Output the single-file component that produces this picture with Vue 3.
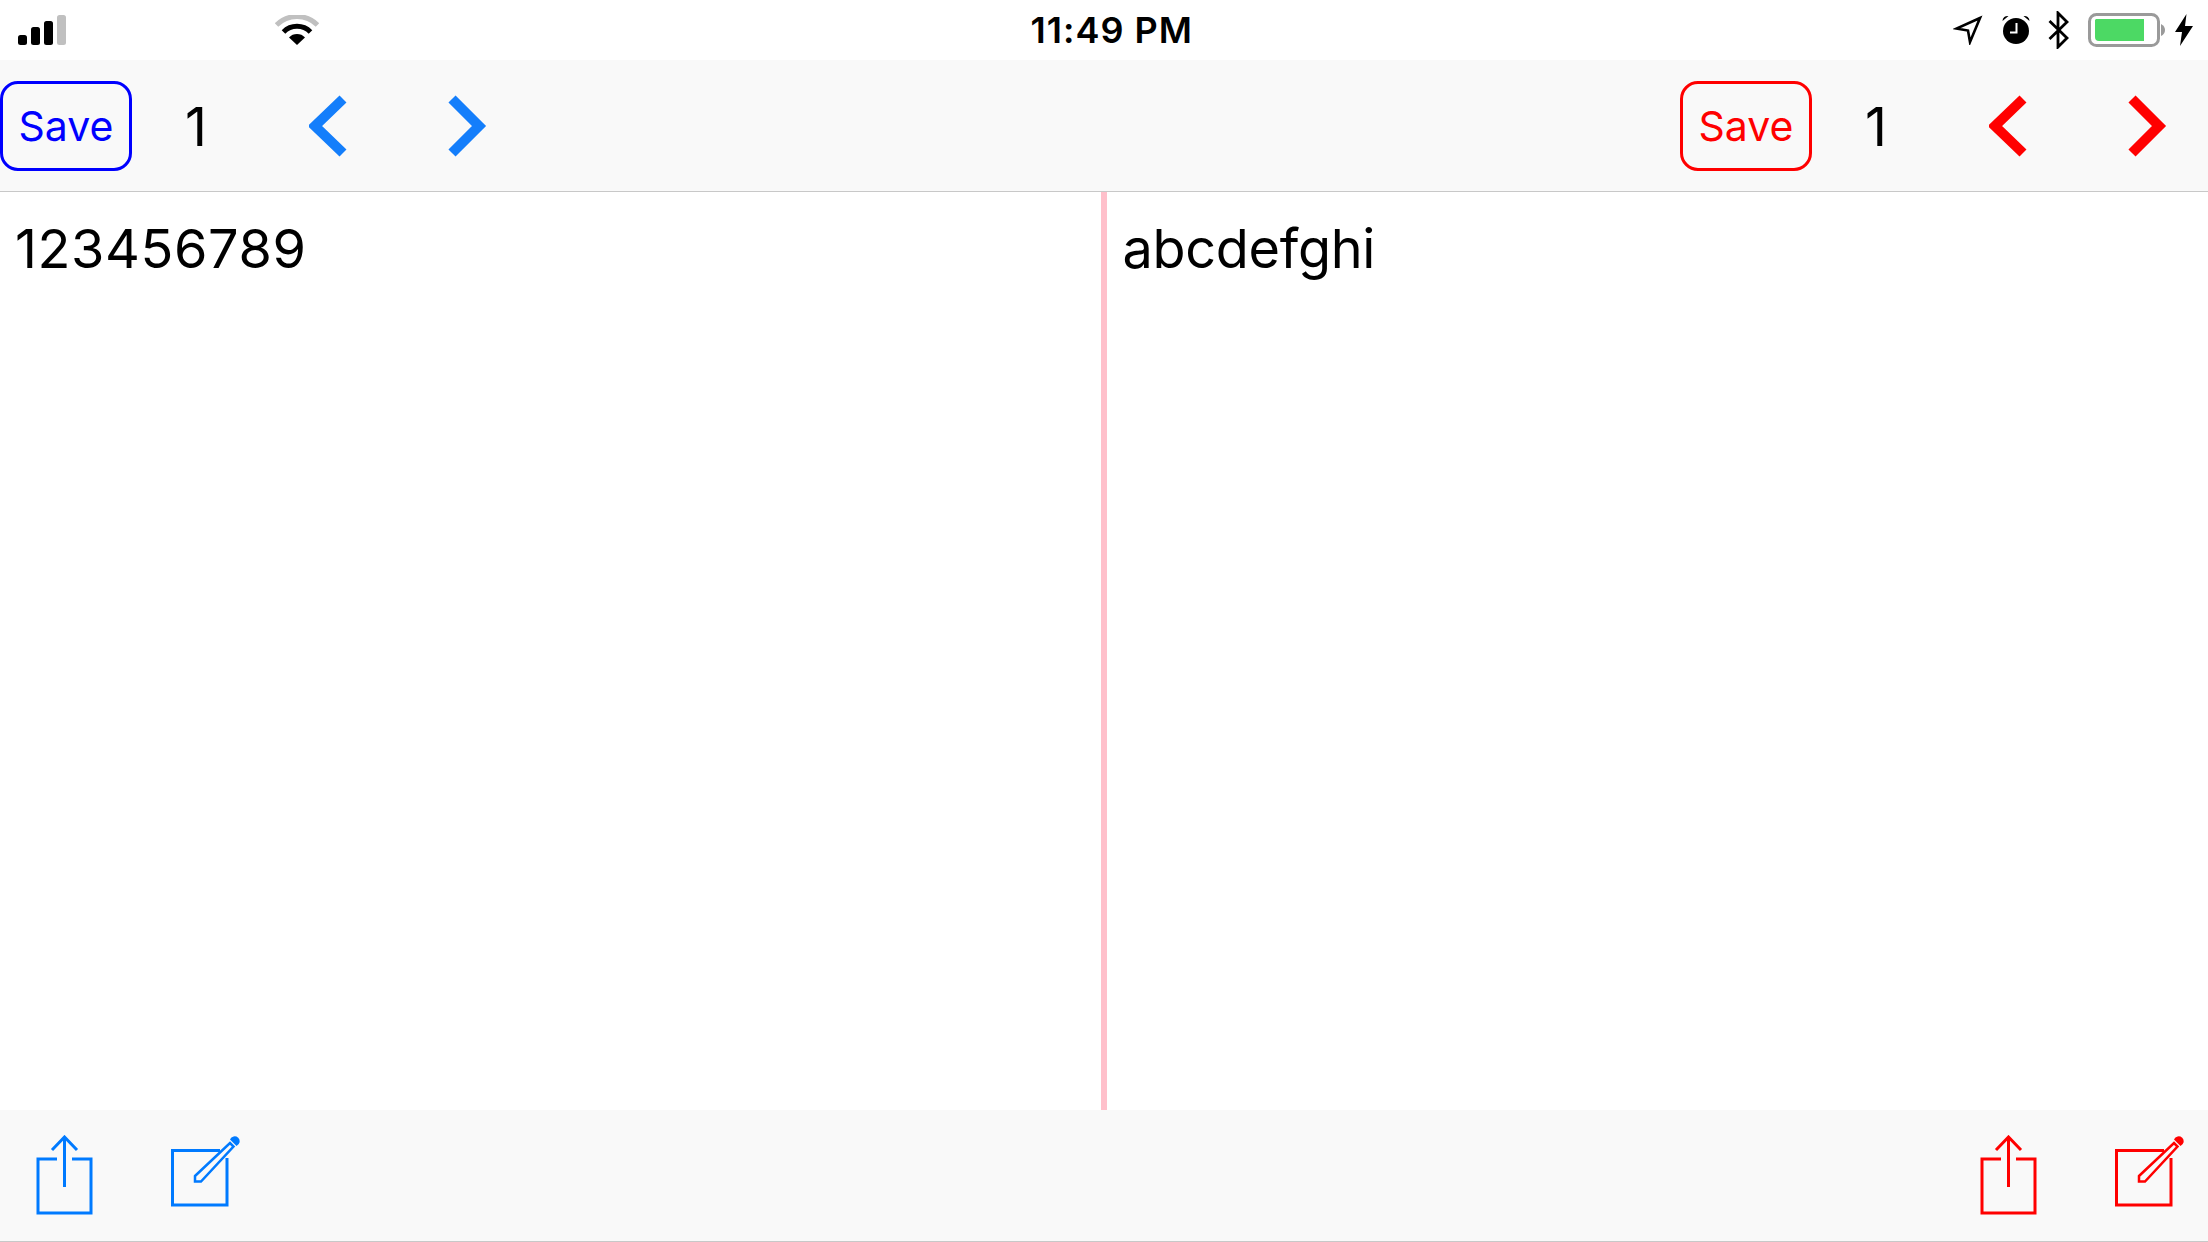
<template>
  <div class="screen">
    <div class="status-bar">
      <div class="status-left">
        <svg class="signal" width="48" height="30" viewBox="0 0 48 30">
          <rect x="0" y="20" width="9" height="10" rx="2.5" fill="#000" />
          <rect x="13" y="12" width="9" height="18" rx="2.5" fill="#000" />
          <rect x="26" y="6" width="9" height="24" rx="2.5" fill="#000" />
          <rect x="39" y="0" width="9" height="30" rx="2.5" fill="#c0c0c0" />
        </svg>
        <svg class="wifi" width="44" height="30" viewBox="0 0 44 30">
          <path d="M1.5 10 A29 29 0 0 1 42.5 10" fill="none" stroke="#c0c0c0" stroke-width="5" />
          <path d="M8.5 17 A19 19 0 0 1 35.5 17" fill="none" stroke="#000" stroke-width="5" />
          <path d="M14 22.5 A11 11 0 0 1 30 22.5 L22 30 Z" fill="#000" />
        </svg>
      </div>
      <div class="clock">11:49 PM</div>
      <div class="status-right">
        <svg width="30" height="30" viewBox="0 0 30 30">
          <path d="M27 3 L3.5 13.5 L15 15.5 L17 27 Z" fill="none" stroke="#000" stroke-width="2.6" stroke-linejoin="miter" />
        </svg>
        <svg class="alarm" width="28" height="30" viewBox="0 0 28 30">
          <circle cx="14" cy="16" r="13" fill="#000" />
          <path d="M0.5 6 A5 5 0 0 1 6.5 1 Z M27.5 6 A5 5 0 0 0 21.5 1 Z" fill="#000" />
          <path d="M14.5 8 V17.5 H8" fill="none" stroke="#fff" stroke-width="2" />
        </svg>
        <svg class="bluetooth" width="22" height="38" viewBox="0 0 22 38">
          <path d="M1.5 10 L19 27 L10 36 V2 L19 11 L1.5 28" fill="none" stroke="#000" stroke-width="2.8" />
        </svg>
        <svg class="battery" width="78" height="34" viewBox="0 0 78 34">
          <rect x="1.5" y="1.5" width="69" height="31" rx="7" fill="none" stroke="#9a9a9a" stroke-width="3" />
          <path d="M8 6 H56 V28 H11 A4 4 0 0 1 7 24 V7 Z" fill="#4cd964" />
          <path d="M73 11 Q77 13 77 17 Q77 21 73 23 Z" fill="#9a9a9a" />
        </svg>
        <svg class="bolt" width="18" height="32" viewBox="0 0 18 32">
          <path d="M11.5 0 L0 18 H7 L5 32 L18 12 H10 Z" fill="#000" />
        </svg>
      </div>
    </div>

    <div class="toolbar top">
      <div v-for="side in sides" :key="side.name" class="pager" :class="side.name">
        <button class="save">Save</button>
        <span class="count">1</span>
        <svg class="chev" width="40" height="64" viewBox="0 0 40 64">
          <polyline points="34,5 6,32 34,59" fill="none" :stroke="side.accent" stroke-width="10" />
        </svg>
        <svg class="chev next" width="40" height="64" viewBox="0 0 40 64">
          <polyline points="5,5 32,32 5,59" fill="none" :stroke="side.accent" stroke-width="10" />
        </svg>
      </div>
    </div>

    <div class="panes">
      <div class="pane digits">123456789</div>
      <div class="divider"></div>
      <div class="pane letters">abcdefghi</div>
    </div>

    <div class="toolbar bottom">
      <div v-for="side in sides" :key="side.name" class="actions">
        <svg class="share" width="58" height="80" viewBox="0 0 58 80" fill="none" :stroke="side.tint" stroke-width="3">
          <path d="M21 24 H2 V78 H55 V24 H36" />
          <path d="M28.5 52 V2" />
          <path d="M16 15 L28.5 2 L41 15" />
        </svg>
        <svg class="compose" width="72" height="72" viewBox="0 0 72 72" fill="none" :stroke="side.tint" stroke-width="3">
          <path d="M50 14.5 H2.5 V69 H57 V22" />
          <path d="M25 40 L60 7 L63.5 10.5 L31 45.5 H25 Z" stroke-width="2.5" />
          <path d="M60 3.5 A5 5 0 1 1 66.5 10 Z" :fill="side.tint" stroke="none" />
        </svg>
      </div>
    </div>
  </div>
</template>

<script setup>
const sides = [
  { name: 'blue', accent: '#147efb', tint: '#007aff' },
  { name: 'red', accent: '#ff0000', tint: '#ff0000' },
]
</script>

<style>
html,
body {
  margin: 0;
  background: #fff;
}
</style>

<style scoped>
.screen {
  width: 2208px;
  height: 1242px;
  display: flex;
  flex-direction: column;
  font-family: Inter, "Liberation Sans", sans-serif;
  color: #000;
  background: #fff;
  overflow: hidden;
}

.status-bar {
  height: 60px;
  flex-shrink: 0;
  display: flex;
  align-items: center;
}

.status-left {
  flex: 1;
  display: flex;
  align-items: center;
  padding-left: 18px;
}

.wifi {
  margin-left: 209px;
}

.clock {
  font-size: 36px;
  font-weight: 600;
  letter-spacing: 1px;
  line-height: 62px;
  width: 162px;
  margin: 0 12px 0 24px;
  white-space: nowrap;
  text-align: center;
}

.status-right {
  flex: 1;
  display: flex;
  align-items: center;
  justify-content: flex-end;
  padding-right: 15px;
}

.alarm {
  margin-left: 19px;
}

.bluetooth {
  margin-left: 18px;
}

.battery {
  margin-left: 18px;
}

.bolt {
  margin-left: 9px;
}

.toolbar {
  flex-shrink: 0;
  display: flex;
  justify-content: space-between;
  align-items: center;
  height: 131px;
  background: #f9f9f9;
  border-bottom: 1px solid #c8c8c8;
}

.pager {
  display: flex;
  align-items: center;
}

.save {
  width: 132px;
  height: 90px;
  padding: 0;
  box-sizing: border-box;
  background: transparent;
  border: 3px solid currentColor;
  border-radius: 18px;
  font-family: inherit;
  font-size: 41px;
}

.blue .save {
  color: #0000ff;
}

.red .save {
  color: #ff0000;
}

.count {
  width: 128px;
  text-align: center;
  font-size: 54px;
  line-height: 66px;
  padding-top: 2px;
}

.chev {
  margin-left: 49px;
}

.chev.next {
  margin-left: 98px;
}

.red {
  padding-right: 41px;
}

.panes {
  flex: 1;
  display: flex;
  min-height: 0;
}

.pane {
  flex: 1;
  padding: 21px 15px;
  font-size: 54px;
  line-height: 72px;
}

.digits {
  letter-spacing: 0.6px;
}

.letters {
  padding-left: 16px;
  letter-spacing: -0.3px;
}

.divider {
  width: 6px;
  background: #ffc0cb;
}

.actions {
  display: flex;
  align-items: center;
  padding-left: 36px;
}

.actions:last-child {
  padding-right: 22px;
}

.share {
  margin-top: -2px;
}

.compose {
  margin-left: 76px;
  margin-top: -8px;
}
</style>
